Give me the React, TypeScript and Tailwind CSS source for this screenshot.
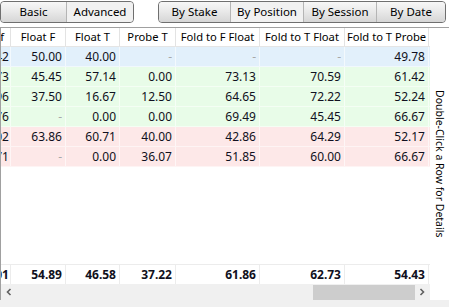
const font = { fontFamily: '"Noto Sans", "Open Sans", sans-serif' }

const cols = [11, 55, 54, 56, 84, 85, 84]
const headers = ['Cbet Fold to Raise f', 'Float F', 'Float T', 'Probe T', 'Fold to F Float', 'Fold to T Float', 'Fold to T Probe']

type Row = { tone: 'blue' | 'green' | 'red'; cells: string[] }

const rows: Row[] = [
  { tone: 'blue', cells: ['54.42', '50.00', '40.00', '-', '-', '-', '49.78'] },
  { tone: 'green', cells: ['62.73', '45.45', '57.14', '0.00', '73.13', '70.59', '61.42'] },
  { tone: 'green', cells: ['52.96', '37.50', '16.67', '12.50', '64.65', '72.22', '52.24'] },
  { tone: 'green', cells: ['47.76', '-', '0.00', '0.00', '69.49', '45.45', '66.67'] },
  { tone: 'red', cells: ['55.02', '63.86', '60.71', '40.00', '42.86', '64.29', '52.17'] },
  { tone: 'red', cells: ['48.71', '-', '0.00', '36.07', '51.85', '60.00', '66.67'] },
]

const totals = ['53.01', '54.89', '46.58', '37.22', '61.86', '62.73', '54.43']

const toneBg = {
  blue: 'bg-[#e2f0fb]',
  green: 'bg-[#e8fce8]',
  red: 'bg-[#fde8e8]',
}

function SegButton({ label, active, first, last, width }: { label: string; active?: boolean; first?: boolean; last?: boolean; width: string }) {
  return (
    <div
      className={`${width} h-full flex items-center justify-center text-[11.5px] text-black ${
        active ? 'bg-[#f1f1f1]' : 'bg-gradient-to-b from-[#f7f7f7] via-[#e8e8e8] to-[#d6d6d6]'
      } ${first ? 'rounded-l-[3px]' : 'border-l border-[#b5b5b5]'} ${last ? 'rounded-r-[3px]' : ''}`}
    >
      {label}
    </div>
  )
}

export default function App() {
  return (
    <div className="w-[449px] h-[307px] bg-white overflow-hidden flex flex-col" style={font}>
      <div className="h-[27px] flex items-start pt-[1px]">
        <div className="flex h-[22px] border border-[#6f6f6f] rounded-[4px] overflow-hidden">
          <SegButton label="Basic" first width="w-[65px]" />
          <SegButton label="Advanced" active last width="w-[67px]" />
        </div>
        <div className="flex h-[22px] ml-[24px] border border-[#6f6f6f] rounded-[4px] overflow-hidden">
          <SegButton label="By Stake" first width="w-[71px]" />
          <SegButton label="By Position" active width="w-[73px]" />
          <SegButton label="By Session" width="w-[73px]" />
          <SegButton label="By Date" last width="w-[69px]" />
        </div>
      </div>

      <div className="flex h-[273px] border-t border-[#a0a0a0]">
        <div className="w-[430px] flex flex-col border-l border-[#a0a0a0]">
          <div className="flex h-[19px] border-b border-[#e5e5e5] bg-white">
            {headers.map((h, i) => (
              <div
                key={h}
                style={{ width: cols[i] - (i === 0 ? 1 : 0) }}
                className={`h-full flex items-center overflow-hidden whitespace-nowrap text-[11.2px] text-black border-r border-[#e3e3e3] ${
                  i === 0 ? 'justify-end pr-[6px]' : 'justify-center'
                }`}
              >
                <span className="shrink-0">{h}</span>
              </div>
            ))}
          </div>

          {rows.map((r, ri) => (
            <div key={ri} className={`flex h-[20px] ${toneBg[r.tone]} border-b border-white/50`}>
              {r.cells.map((c, ci) => (
                <div
                  key={ci}
                  style={{ width: cols[ci] - (ci === 0 ? 1 : 0) }}
                  className={`h-full flex items-center justify-end overflow-hidden whitespace-nowrap text-[12px] border-r border-white/60 ${
                    ci === 0 ? 'pr-[1px]' : 'pr-[3px]'
                  }`}
                >
                  <span className={`shrink-0 ${c === '-' ? 'text-[#a8a8a8]' : 'text-[#101020]'}`}>{c}</span>
                </div>
              ))}
            </div>
          ))}

          <div className="flex-1" />

          <div className="flex h-[20px] border-t border-[#ececec]">
            {totals.map((c, ci) => (
              <div
                key={ci}
                style={{ width: cols[ci] - (ci === 0 ? 1 : 0) }}
                className={`h-full flex items-center justify-end overflow-hidden whitespace-nowrap text-[12px] font-bold text-[#101020] border-r border-[#ececec] ${
                  ci === 0 ? 'pr-[1px]' : 'pr-[3px]'
                }`}
              >
                <span className="shrink-0">{c}</span>
              </div>
            ))}
          </div>

          <div className="h-[16px] bg-[#f0f0f0] flex items-center">
            <div className="w-[16px] h-full flex items-center justify-center">
              <svg width="8" height="8" viewBox="0 0 8 8">
                <path d="M5.5 1 L2.5 4 L5.5 7" fill="none" stroke="#606060" strokeWidth="1.6" />
              </svg>
            </div>
            <div className="flex-1 h-full flex items-center pl-[296px]">
              <div className="w-[102px] h-[15px] bg-[#cdcdcd]" />
            </div>
            <div className="w-[16px] h-full flex items-center justify-center">
              <svg width="8" height="8" viewBox="0 0 8 8">
                <path d="M2.5 1 L5.5 4 L2.5 7" fill="none" stroke="#606060" strokeWidth="1.6" />
              </svg>
            </div>
          </div>
        </div>

        <div className="w-[19px] flex items-center justify-center">
          <span className="[writing-mode:vertical-rl] text-[10.5px] text-black whitespace-nowrap">
            Double-Click a Row for Details
          </span>
        </div>
      </div>

      <div className="flex-1 bg-[#f0f0f0]" />
    </div>
  )
}
